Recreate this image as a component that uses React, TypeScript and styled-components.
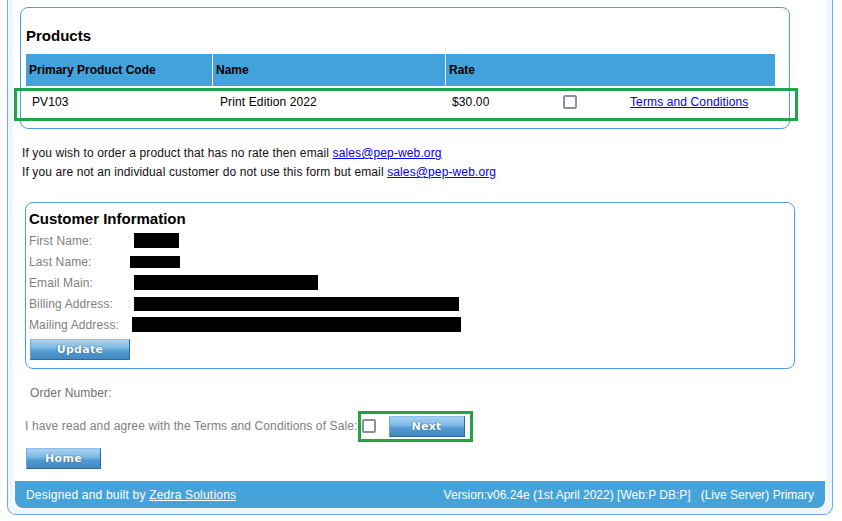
import styled, { createGlobalStyle } from 'styled-components';

const GlobalStyle = createGlobalStyle`
  html, body {
    margin: 0;
    padding: 0;
    background: #ffffff;
  }
  body {
    font-family: "Liberation Sans", Arial, sans-serif;
    font-size: 12px;
    letter-spacing: 0.12px;
    color: #111;
  }
`;

const Outer = styled.div`
  margin: 0 9px 0 7px;
  padding: 0 5px 5px;
  background: #edf6fe;
  border: 1px solid #72a9e8;
  border-top: none;
  border-radius: 0 0 9px 9px;
`;

const Inner = styled.div`
  background: #ffffff;
  border-radius: 0 0 7px 7px;
  padding-top: 7px;
  padding-bottom: 1px;
`;

const Box = styled.div<{ $left: number; $top?: number }>`
  position: relative;
  margin-left: ${(p) => p.$left}px;
  margin-top: ${(p) => p.$top ?? 0}px;
  width: 770px;
  box-sizing: border-box;
  border: 1px solid #46a2df;
  border-radius: 8px;
`;

const Heading = styled.h2`
  margin: 0;
  font-family: "Liberation Sans", Arial, sans-serif;
  font-size: 15px;
  font-weight: bold;
  line-height: 18px;
  letter-spacing: 0;
  color: #000;
`;

const ProductsHeading = styled(Heading)`
  padding: 19px 0 0 5px;
`;

const TableHead = styled.div`
  display: grid;
  grid-template-columns: 187px 233px 329px;
  width: 749px;
  height: 32px;
  margin: 9px 0 0 5px;
  background: #42a2dc;
`;

const HeadCell = styled.div<{ $last?: boolean }>`
  display: flex;
  align-items: center;
  padding-left: 3px;
  font-weight: bold;
  font-size: 12px;
  letter-spacing: 0;
  color: #000;
  border-right: ${(p) => (p.$last ? 'none' : '1px solid #ffffff')};
`;

const Row = styled.div`
  display: grid;
  grid-template-columns: 188px 233px 116px 67px 1fr;
  width: 749px;
  height: 32px;
  margin: 0 0 9px 5px;
  border-bottom: 1px dotted #9a9a9a;
`;

const Cell = styled.div<{ $pad?: number }>`
  display: flex;
  align-items: center;
  padding-left: ${(p) => p.$pad ?? 0}px;
  color: #000;
`;

const Check = styled.input.attrs({ type: 'checkbox' })`
  appearance: none;
  margin: 0;
  width: 14px;
  height: 14px;
  box-sizing: border-box;
  border: 2px solid #8e8e9a;
  border-radius: 2px;
  background: #fff;
`;

const Link = styled.a`
  color: #0000ee;
  text-decoration: underline;
`;

const Highlight = styled.div<{ $x: number; $y: number; $w: number; $h: number }>`
  position: absolute;
  left: ${(p) => p.$x}px;
  top: ${(p) => p.$y}px;
  width: ${(p) => p.$w}px;
  height: ${(p) => p.$h}px;
  box-sizing: border-box;
  border: 3px solid #1fa546;
  pointer-events: none;
`;

const Notes = styled.div`
  margin: 15px 0 0 9px;
  line-height: 19px;
  color: #111;
`;

const CustomerHeading = styled(Heading)`
  padding: 7px 0 0 3px;
`;

const FieldList = styled.div`
  margin-top: 2px;
  padding-left: 3px;
`;

const Field = styled.div`
  display: grid;
  grid-template-columns: 105px 1fr;
  align-items: center;
  height: 21px;
`;

const Label = styled.span`
  color: #808080;
`;

const Redacted = styled.span<{ $w: number; $h: number; $dx: number }>`
  display: block;
  width: ${(p) => p.$w}px;
  height: ${(p) => p.$h}px;
  margin-left: ${(p) => p.$dx}px;
  background: #000;
`;

const Button = styled.button<{ $w: number }>`
  width: ${(p) => p.$w}px;
  height: 21px;
  padding: 0;
  box-sizing: border-box;
  border: 1px solid;
  border-color: #8cc0ea #2c6a97 #2c6a97 #6aa7d8;
  background: linear-gradient(#a9d2f1 0%, #7fbbe7 40%, #5199d0 60%, #4289c1 100%);
  color: #ffffff;
  font-family: "DejaVu Sans", Verdana, sans-serif;
  font-size: 11px;
  font-weight: bold;
  letter-spacing: 0.3px;
  text-shadow: 0 0 1px #2b5e86, 0 0 1px #2b5e86;
  cursor: pointer;
`;

const UpdateWrap = styled.div`
  padding: 4px 0 8px 4px;
`;

const OrderLine = styled.div`
  margin: 16px 0 0 17px;
  line-height: 16px;
  color: #707070;
`;

const AgreeRow = styled.div`
  position: relative;
  display: flex;
  align-items: center;
  height: 22px;
  margin: 14px 0 0 12px;
  color: #808080;
`;

const AgreeCheck = styled(Check)`
  margin-left: 4px;
`;

const NextButton = styled(Button)`
  margin-left: 13px;
`;

const HomeWrap = styled.div`
  margin: 11px 0 0 13px;
`;

const Footer = styled.div`
  display: flex;
  justify-content: space-between;
  align-items: center;
  height: 27px;
  margin: 12px 2px 0;
  padding: 0 11px;
  background: #46a3da;
  border-radius: 0 0 8px 8px;
  color: #ffffff;
`;

const FooterLeft = styled.span`
  letter-spacing: 0.2px;
`;

const FooterRight = styled.span`
  letter-spacing: 0;
`;

const FooterLink = styled.a`
  color: #ffffff;
  text-decoration: underline;
`;

const fields = [
  { label: 'First Name:', w: 45, h: 15, dx: 0 },
  { label: 'Last Name:', w: 50, h: 12, dx: -4 },
  { label: 'Email Main:', w: 184, h: 15, dx: 0 },
  { label: 'Billing Address:', w: 325, h: 14, dx: 0 },
  { label: 'Mailing Address:', w: 329, h: 15, dx: -2 },
];

export default function App() {
  return (
    <>
      <GlobalStyle />
      <Outer>
        <Inner>
          <Box $left={7}>
            <ProductsHeading>Products</ProductsHeading>
            <TableHead>
              <HeadCell>Primary Product Code</HeadCell>
              <HeadCell>Name</HeadCell>
              <HeadCell $last>Rate</HeadCell>
            </TableHead>
            <Row>
              <Cell $pad={6}>PV103</Cell>
              <Cell $pad={6}>Print Edition 2022</Cell>
              <Cell $pad={5}>$30.00</Cell>
              <Cell>
                <Check />
              </Cell>
              <Cell>
                <Link href="#">Terms and Conditions</Link>
              </Cell>
            </Row>
            <Highlight $x={-7} $y={80} $w={784} $h={33} />
          </Box>

          <Notes>
            <div>
              If you wish to order a product that has no rate then email{' '}
              <Link href="#">sales@pep-web.org</Link>
            </div>
            <div>
              If you are not an individual customer do not use this form but email{' '}
              <Link href="#">sales@pep-web.org</Link>
            </div>
          </Notes>

          <Box $left={12} $top={20}>
            <CustomerHeading>Customer Information</CustomerHeading>
            <FieldList>
              {fields.map((f) => (
                <Field key={f.label}>
                  <Label>{f.label}</Label>
                  <Redacted $w={f.w} $h={f.h} $dx={f.dx} />
                </Field>
              ))}
            </FieldList>
            <UpdateWrap>
              <Button $w={100}>Update</Button>
            </UpdateWrap>
          </Box>

          <OrderLine>Order Number:</OrderLine>

          <AgreeRow>
            I have read and agree with the Terms and Conditions of Sale:
            <AgreeCheck />
            <NextButton $w={76}>Next</NextButton>
            <Highlight $x={333} $y={-4} $w={115} $h={31} />
          </AgreeRow>

          <HomeWrap>
            <Button $w={75}>Home</Button>
          </HomeWrap>

          <Footer>
            <FooterLeft>
              Designed and built by <FooterLink href="#">Zedra Solutions</FooterLink>
            </FooterLeft>
            <FooterRight>
              Version:v06.24e (1st April 2022) [Web:P DB:P]&nbsp;&nbsp; (Live Server) Primary
            </FooterRight>
          </Footer>
        </Inner>
      </Outer>
    </>
  );
}
